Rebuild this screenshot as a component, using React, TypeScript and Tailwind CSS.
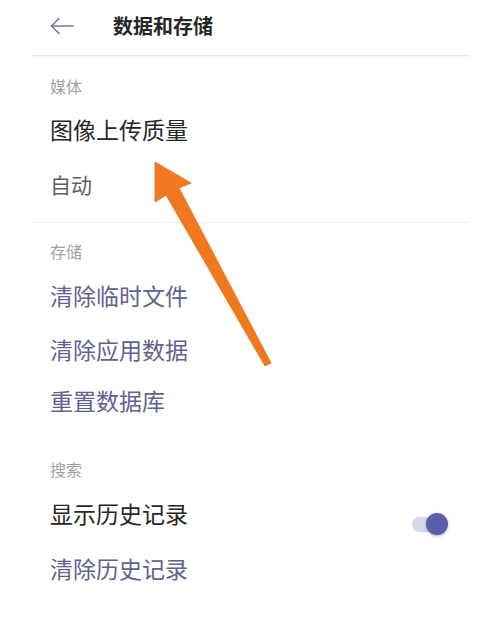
import React from "react";

const font = { fontFamily: '"Noto Sans CJK SC", "Noto Sans", sans-serif' };

function Label({ children, className = "" }: { children: React.ReactNode; className?: string }) {
  return <div className={`text-[16px] leading-[20px] text-[#a0a0a0] ${className}`}>{children}</div>;
}

function Item({ children, className = "", tone = "dark" }: { children: React.ReactNode; className?: string; tone?: "dark" | "link" }) {
  const color = tone === "dark" ? "text-[#262626]" : "text-[#5f618f]";
  return <div className={`text-[23px] leading-[30px] ${color} ${className}`}>{children}</div>;
}

export default function App() {
  return (
    <div className="relative w-[501px] h-[638px] bg-white overflow-hidden" style={font}>
      {/* header */}
      <div className="h-[55px] flex items-center pl-[50px] pb-[4px]">
        <svg width="24" height="18" viewBox="0 0 24 18" fill="none" stroke="#7375a3" strokeWidth="1.6" strokeLinecap="round" strokeLinejoin="round">
          <path d="M23 9H2M9 1.5L1.5 9L9 16.5" />
        </svg>
        <div className="ml-[39px] text-[20px] font-bold text-[#262626] leading-[28px]">数据和存储</div>
      </div>
      <div className="mx-[32px] h-px bg-[#e6e6e6] shadow-[0_1px_2px_rgba(0,0,0,0.06)]" />

      <div className="px-[50px]">
        <Label className="mt-[20px]">媒体</Label>
        <Item className="mt-[18px]">图像上传质量</Item>
        <div className="mt-[26px] text-[21px] leading-[28px] text-[#5e5e5e]">自动</div>
      </div>

      <div className="mx-[32px] mt-[24px] h-px bg-[#ededed]" />

      <div className="px-[50px]">
        <Label className="mt-[18px]">存储</Label>
        <Item tone="link" className="mt-[19px]">清除临时文件</Item>
        <Item tone="link" className="mt-[24px]">清除应用数据</Item>
        <Item tone="link" className="mt-[21px]">重置数据库</Item>

        <Label className="mt-[44px]">搜索</Label>
        <div className="mt-[19px] flex items-start justify-between pr-[1px]">
          <Item>显示历史记录</Item>
          <div className="relative mt-[15px] mr-[2px] w-[36px] h-[22px] flex items-center">
            <div className="w-[34px] h-[15px] rounded-full bg-[#d7d8ea]" />
            <div className="absolute right-0 top-0 w-[22px] h-[22px] rounded-full bg-[#5b5ea8] shadow-[0_1px_3px_rgba(0,0,0,0.3)]" />
          </div>
        </div>
        <Item tone="link" className="mt-[18px]">清除历史记录</Item>
      </div>

      {/* annotation arrow */}
      <svg className="absolute inset-0 pointer-events-none" width="501" height="638" viewBox="0 0 501 638">
        <polygon
          points="155,162 191,183 179,188 271,363 265,366 166,195 155,202"
          fill="#f0781f"
          stroke="#f0781f"
          strokeWidth="1"
          strokeLinejoin="round"
        />
      </svg>
    </div>
  );
}
